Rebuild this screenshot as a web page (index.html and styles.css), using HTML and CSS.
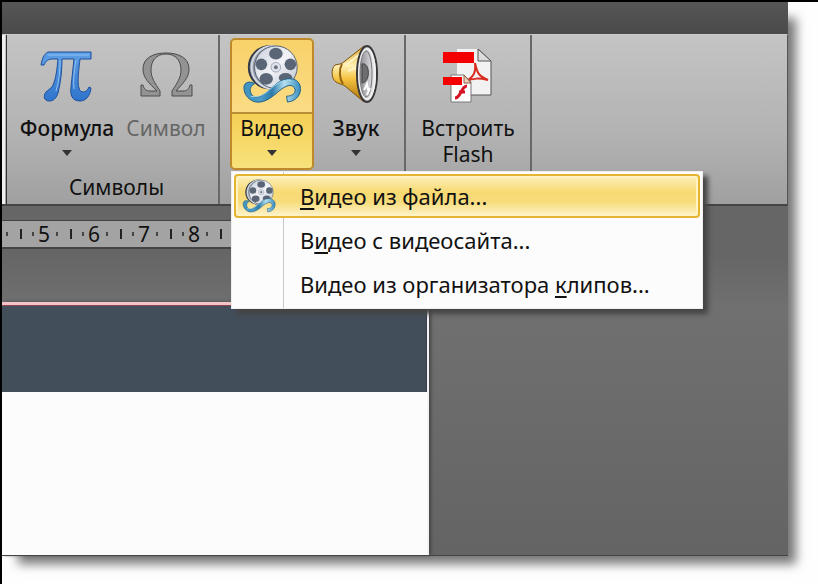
FILE: index.html
```html
<!doctype html>
<html lang="ru">
  <head>
    <meta charset="utf-8">
    <title>Видео</title>
    <link rel="stylesheet" href="styles.css">
  </head>
  <body>

    <!-- film reel, used by the ribbon button and the menu -->
    <svg class="defs" width="0" height="0" aria-hidden="true">
      <defs>
        <linearGradient id="reelFace" x1="0" y1="0" x2="1" y2="1">
          <stop offset="0" stop-color="#c9ced8"/>
          <stop offset="0.5" stop-color="#f2f3f8"/>
          <stop offset="1" stop-color="#b9c0cd"/>
        </linearGradient>
        <linearGradient id="film" gradientUnits="userSpaceOnUse" x1="0" y1="0" x2="58" y2="0">
          <stop offset="0" stop-color="#3f93be"/>
          <stop offset="0.3" stop-color="#4b9cc6"/>
          <stop offset="0.5" stop-color="#2d7bab"/>
          <stop offset="0.72" stop-color="#b4dff0"/>
          <stop offset="1" stop-color="#3a90c0"/>
        </linearGradient>
        <linearGradient id="horn" x1="0" y1="0" x2="0" y2="1">
          <stop offset="0" stop-color="#d9a52c"/>
          <stop offset="0.35" stop-color="#fff0b4"/>
          <stop offset="0.6" stop-color="#f4c03c"/>
          <stop offset="1" stop-color="#a56f0c"/>
        </linearGradient>
        <linearGradient id="cone" x1="0" y1="0" x2="1" y2="0">
          <stop offset="0" stop-color="#77777b"/>
          <stop offset="0.6" stop-color="#cacace"/>
          <stop offset="1" stop-color="#f5f5f5"/>
        </linearGradient>
        <linearGradient id="piFill" x1="0" y1="0" x2="0" y2="1">
          <stop offset="0" stop-color="#5f9fe6"/>
          <stop offset="1" stop-color="#2f74cc"/>
        </linearGradient>
        <symbol id="reel" viewBox="-2 -1 62 62">
          <ellipse cx="27" cy="23" rx="22" ry="22" fill="#8d97a5" stroke="#343c48" stroke-width="2"/>
          <ellipse cx="29" cy="23" rx="21" ry="22" fill="none" stroke="#d5dae2" stroke-width="2"/>
          <ellipse cx="33" cy="23" rx="22" ry="22" fill="url(#reelFace)" stroke="#56606e" stroke-width="1"/>
          <ellipse cx="33" cy="9" rx="7" ry="6" fill="#5a6675"/>
          <ellipse cx="48" cy="20" rx="6" ry="6" fill="#5a6675"/>
          <ellipse cx="18" cy="20" rx="6" ry="6" fill="#5a6675"/>
          <ellipse cx="23" cy="35" rx="7" ry="6" fill="#5a6675"/>
          <ellipse cx="43" cy="34" rx="7" ry="5" fill="#5a6675"/>
          <circle cx="33" cy="23" r="5" fill="#e0e3ea" stroke="#a0a8b4"/>
          <circle cx="33" cy="23" r="2" fill="#6b7583"/>
          <path d="M11 40C7 37 0 38 0 44c0 8 6 14 13 15 10 1 18-7 24-12 6-5 12-7 15-3 3 5-2 9-8 9l1 6c10-1 15-9 13-17-3-9-14-9-23-3-8 6-14 14-22 15C7 54 3 44 11 40z" fill="url(#film)" stroke="#1f5f88"/>
          <path d="M7 53c9 2 16-3 22-9 7-6 14-9 20-7" fill="none" stroke="#a8d9ec" stroke-width="1"/>
        </symbol>
      </defs>
    </svg>

    <div class="frame">
      <div class="window">
        <div class="titlebar"></div>

        <div class="ribbon">
          <div class="group symbols">
            <div class="tools">
              <button class="tool formula" type="button">
                <svg class="icon" viewBox="0 0 60 60" aria-hidden="true">
                  <path d="M11 8H54V15H43C42 24 40 38 42 44c1 6 8 5 10-1l2 1c-1 8-5 13-11 13-8 0-10-6-9-14L37 15H25c0 10-1 22-4 34-2 6-5 8-9 8-5 0-6-5-3-9 2-2 4-3 6-5 4-7 5-18 6-28H16c-5 0-7 2-9 6H4c1-6 3-11 7-13z" fill="url(#piFill)" stroke="#1d5099" stroke-width="1"/>
                  <path d="M11 11H52M23 16c0 11-1 22-4 31M39 16c-2 11-3 20-2 29" fill="none" stroke="#8fc0f5"/>
                </svg>
                <span>Формула</span>
                <i class="arrow"></i>
              </button>
              <button class="tool symbol" type="button" disabled>
                <svg class="icon" viewBox="0 0 60 60" aria-hidden="true">
                  <path d="M5 41H7c1 4 3 6 7 6h7C13 39 7 34 7 25 7 14 17 9 30 9s23 5 23 16c0 9-6 14-13 22h7c4 0 6-2 7-6h2V52H36V47c5-8 9-13 9-21 0-9-5-16-15-16s-15 7-15 16c0 8 4 13 9 21v5H5z" fill="#939393" stroke="#4c4c4c" stroke-width="1"/>
                </svg>
                <span>Символ</span>
              </button>
            </div>
            <div class="caption">Символы</div>
          </div>

          <div class="group media">
            <div class="tools">
              <div class="dropdown">
                <button class="tool active" type="button" aria-haspopup="true" aria-expanded="true">
                  <svg class="icon" viewBox="0 0 60 60" aria-hidden="true"><use href="#reel"/></svg>
                  <span>Видео</span>
                  <i class="arrow"></i>
                </button>
                <div class="menu" role="menu">
                  <button class="item selected" type="button" role="menuitem">
                    <span class="gutter"><svg viewBox="0 0 60 60" aria-hidden="true"><use href="#reel"/></svg></span>
                    <span><u>В</u>идео из файла...</span>
                  </button>
                  <button class="item" type="button" role="menuitem">
                    <span class="gutter"></span>
                    <span>В<u>и</u>део с видеосайта...</span>
                  </button>
                  <button class="item" type="button" role="menuitem">
                    <span class="gutter"></span>
                    <span>Видео из организатора <u>к</u>липов...</span>
                  </button>
                </div>
              </div>
              <button class="tool sound" type="button">
                <svg class="icon" viewBox="0 0 60 60" aria-hidden="true">
                  <path d="M9 21c5-1 7-1 10-4L38 2c6 8 5 46 0 56L19 42c-3-2-6-2-9-4-5-3-5-14-1-17z" fill="url(#horn)" stroke="#7c5410"/>
                  <path d="M16 20c-3 5-3 14 1 20" fill="none" stroke="#93640f" stroke-width="2"/>
                  <path d="M20 21L34 10M22 27l10-4" fill="none" stroke="#fff4c8" stroke-width="2"/>
                  <ellipse cx="41" cy="30" rx="10" ry="28" fill="url(#cone)" stroke="#38383b" stroke-width="2"/>
                  <ellipse cx="41" cy="30" rx="8" ry="25" fill="none" stroke="#f0f0f0" stroke-width="2"/>
                  <ellipse cx="40" cy="30" rx="6" ry="23" fill="none" stroke="#77777b" stroke-width="1"/>
                  <path d="M36 20c8-2 9 18 0 19z" fill="#6d6d72" stroke="#444"/>
                  <path d="M38 46l3-6 1 6M41 51l3-7" fill="none" stroke="#fff" stroke-width="2"/>
                </svg>
                <span>Звук</span>
                <i class="arrow"></i>
              </button>
            </div>
          </div>

          <div class="group flash">
            <div class="tools">
              <button class="tool" type="button">
                <svg class="icon" viewBox="0 0 60 60" aria-hidden="true">
                  <path d="M19 5H40L53 17V51H19z" fill="#f2f2f2"/>
                  <path d="M40 5L53 17V51H33" fill="none" stroke="#555" stroke-width="1"/>
                  <path d="M40 5V17H53z" fill="#ddd" stroke="#555"/>
                  <path d="M5 8H36V19H5z" fill="#f40000"/>
                  <path d="M37 19c2 9 3 13 13 17-9-2-14-2-22 1 8-4 10-9 9-18z" fill="none" stroke="#d92b20" stroke-width="2"/>
                  <path d="M13 31H26L33 38V58H13z" fill="#fff" stroke="#777" stroke-width="1"/>
                  <path d="M26 31v8h7z" fill="#f1d1b8" stroke="#8a5b42"/>
                  <path d="M5 33H24V41H5z" fill="#f40000"/>
                  <path d="M29 42c-6 0-6 12-12 12M21 48h6" fill="none" stroke="#d51224" stroke-width="3"/>
                </svg>
                <span>Встроить<br>Flash</span>
              </button>
            </div>
          </div>
        </div>

        <div class="ruler">
          <ol>
            <li></li>
            <li>5</li>
            <li>6</li>
            <li>7</li>
            <li>8</li>
            <li></li>
          </ol>
        </div>

        <div class="workspace">
          <div class="slide">
            <div class="band"></div>
          </div>
        </div>
      </div>
    </div>

  </body>
</html>
```
FILE: styles.css
```css
* { margin: 0; padding: 0; box-sizing: border-box; }
body { font: 21px/26px "Noto Sans", "Open Sans", sans-serif; color: #111; background: #fefefe; }
button { font: inherit; color: inherit; background: none; border: 0; }
.defs { position: absolute; }

.frame { min-height: 100vh; padding: 0 30px 28px 0; border-top: 2px solid #000; border-left: 2px solid #000; display: flex; }
.window { flex: 1; display: flex; flex-direction: column; background: #666; box-shadow: 12px 12px 10px -4px #777; }
.titlebar { height: 32px; background: linear-gradient(#565656, #4a4a4a); }

/* ribbon */
.ribbon { height: 172px; display: flex; padding-left: 4px; background: linear-gradient(#c4c4c4, #b2b2b2 60%, #a0a0a0); border-top: 1px solid #ccc; border-bottom: 2px solid #444; border-right: 1px solid #555; box-shadow: inset 3px 0 #eee; }
.group { display: flex; flex-direction: column; border-right: 2px solid #686868; padding-top: 3px; }
.symbols { width: 214px; border-left: 1px solid #333; padding-left: 8px; }
.media { width: 186px; padding-left: 10px; }
.flash { width: 126px; }
.tools { display: flex; justify-content: center; }
.media .tools { justify-content: flex-start; }
.tool { min-width: 84px; height: 132px; display: flex; flex-direction: column; align-items: center; }
.tool .icon { width: 60px; height: 60px; margin: 6px 0 11px; }
.symbols .tool { width: 99px; }
.symbol { color: #666; }
.formula, .sound { font-weight: 500; }
.arrow { width: 10px; height: 6px; margin-top: 9px; background: #333; clip-path: polygon(0 0, 100% 0, 50% 100%); }
.active { border: 2px solid #c08a2c; border-radius: 5px; background: linear-gradient(#f8d169, #fbdc85 72px, #b98d36 72px, #b98d36 74px, #f4cf55 74px, #f8e27c); }
.active .icon { margin: 4px 0 11px; }
.caption { text-align: center; margin-top: 4px; }

/* drop-down menu */
.dropdown { position: relative; }
.menu { position: absolute; top: 133px; left: 1px; z-index: 2; width: 472px; padding: 2px; font-size: 22px; background: linear-gradient(to right, #fcfcfc 51px, #c8c8cc 51px, #c8c8cc 52px, #fcfcfc 52px); border: 1px solid #eee; box-shadow: 5px 5px 5px #444; }
.item { width: 100%; height: 44px; display: flex; align-items: center; text-align: left; white-space: nowrap; }
.gutter { width: 66px; padding-left: 6px; display: flex; }
.gutter svg { width: 34px; height: 34px; }
.selected { border: 2px solid #e3b530; border-radius: 4px; background: linear-gradient(#fdf0bd, #f7da72 40%, #f8dc7c 65%, #fdf3cb); box-shadow: inset 0 0 0 2px #fff3c4; }
.selected .gutter { width: 64px; }
u { text-decoration-thickness: 2px; text-underline-offset: 3px; text-decoration-skip-ink: none; }

/* ruler */
.ruler { width: 60%; height: 29px; margin-top: 14px; background: #a3a3a3; border-top: 1px solid #444; border-bottom: 2px solid #444; overflow: hidden; }
.ruler ol { display: flex; list-style: none; margin-left: -32px; }
.ruler li { width: 50px; height: 26px; padding-right: 2px; text-align: center; background:
  linear-gradient(#222, #222) 0 8px / 2px 10px no-repeat,
  linear-gradient(#444, #444) 12px 11px / 2px 4px no-repeat,
  linear-gradient(#444, #444) 36px 11px / 2px 4px no-repeat; }

/* slide */
.workspace { flex: 1; display: flex; padding-top: 53px; background: linear-gradient(#656565, #707070 60px, #646464); border-bottom: 1px solid #444; }
.slide { width: calc(54% + 3px); border-top: 3px solid #f2c4c8; border-right: 2px solid #f4f4f8; background: #fcfcfc; box-shadow: 2px 0 3px #444; }
.band { height: 87px; background: #434e5b; border-top: 1px solid #8c4656; border-right: 1px solid #38404c; }
```
